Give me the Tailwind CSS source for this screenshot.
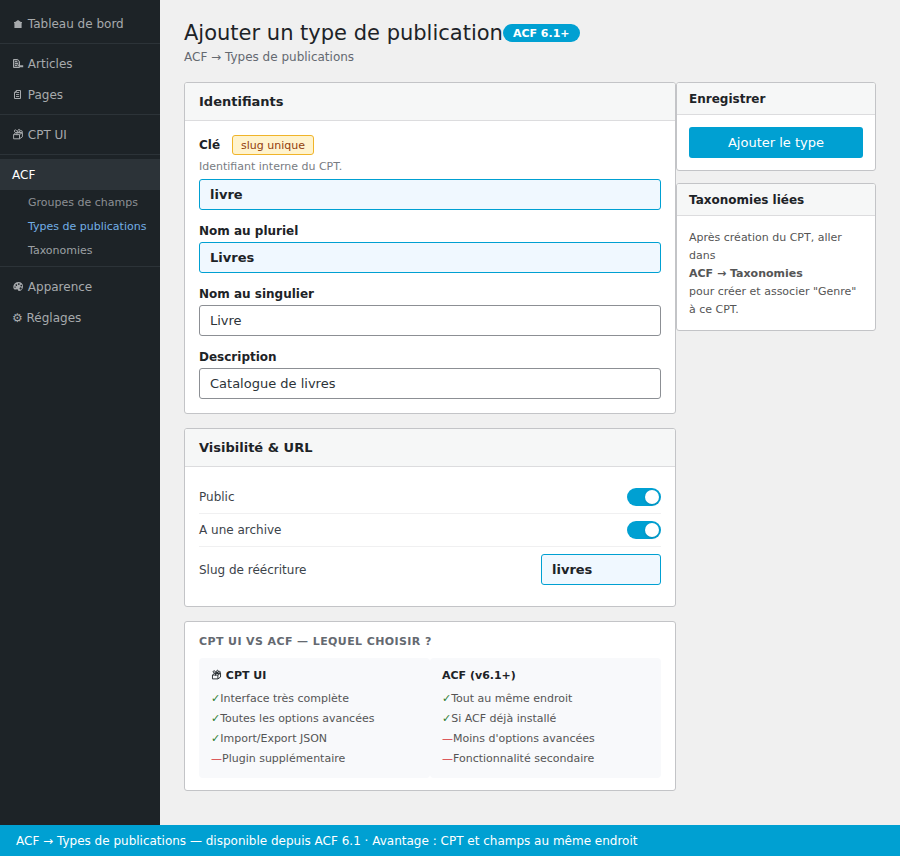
<!DOCTYPE html>
<html lang="fr">
<head>
  <meta charset="UTF-8" />
  <meta name="viewport" content="width=device-width, initial-scale=1" />
  <title>Ajouter un type de publication - ACF</title>
  <script src="https://cdn.jsdelivr.net/npm/@tailwindcss/browser@4"></script>
  <style>
    body { font-family: 'DejaVu Sans', sans-serif; }
  </style>
</head>
<body class="bg-[#f0f0f0] text-[#1d2327] min-h-screen flex flex-col">
  <!-- Icônes -->
  <svg class="hidden" aria-hidden="true">
    <symbol id="i-home" viewBox="0 0 12 12">
      <path d="M6 3 9.6 5.4V11H2.4V5.4Z" fill="currentColor" />
      <path d="M2 5.6h8" stroke="currentColor" />
      <path d="M4.7 7v2.6M7.3 7v2.6" stroke="currentColor" stroke-opacity=".6" />
    </symbol>
    <symbol id="i-articles" viewBox="0 0 12 12">
      <path d="M1.5 2.5h4.2L7.5 4.3v6.2h-6z" fill="currentColor" fill-opacity=".35" stroke="currentColor" />
      <path d="M3 4.5h2M3 6.5h3M3 8.5h2" stroke="currentColor" />
      <path d="M5.2 7.2 8 8.3h3.2v2H7.4Z" fill="currentColor" />
    </symbol>
    <symbol id="i-pages" viewBox="0 0 12 12">
      <path d="M4.3 2.5h4.2v8h-6V4.3Z" fill="none" stroke="currentColor" />
      <path d="M4.4 2.5v2H2.5M4.8 4.5h2.4M4 6.5h3.2M4 8.5h3.2" fill="none" stroke="currentColor" stroke-width=".9" />
    </symbol>
    <symbol id="i-box" viewBox="0 0 12 12">
      <path d="M1.6 6.6h5.9v4.2H1.6zM7.5 6.6l2.9-2v4.2l-2.9 2M1.6 6.6l2.3-2h6.5" fill="none" stroke="currentColor" stroke-linejoin="round" />
      <path d="M5.2 4.8C3 4.8 1.6 3.2 2.6 2.2s2.6.6 3.2 2.4C5.4 2.6 6.2 1 7.4 1.4s.4 2.2-1.2 3.2C7.6 2.8 9.6 2 10.2 3S8.600 5 6.400 4.900M5 5v2.200" fill="none" stroke="currentColor" />
    </symbol>
    <symbol id="i-palette" viewBox="0 0 12 12">
      <path fill-rule="evenodd" d="M6.400 2C9.200 2 11 3.800 11 6.400S9.200 11 7 11C5.800 11 6.300 9.600 5.400 9.200S3.400 10.200 2.200 9.300C.4 8 1.200 2 6.400 2ZM4.300 4.200a.8.8 0 1 0 .1 0ZM6.800 3.300a.8.8 0 1 0 .1 0ZM9.200 4.700a.8.8 0 1 0 .1 0ZM8.600 7.300a1.100 1.100 0 1 0 .1 0ZM3 6.400a.7.7 0 1 0 .1 0Z" fill="currentColor" />
    </symbol>
  </svg>

  <div class="flex flex-grow">
    <!-- Sidebar -->
    <nav class="w-40 shrink-0 bg-[#1d2327] text-[#a7aaad] text-[12px] leading-4 py-2">
      <a href="#" class="block px-3 pt-2 pb-[7px]"><svg class="inline size-3 align-[-1px]"><use href="#i-home" /></svg> Tableau de bord</a>
      <hr class="my-1 border-[#2c3338]" />
      <a href="#" class="block px-3 pt-2 pb-[7px]"><svg class="inline size-3 align-[-1px]"><use href="#i-articles" /></svg> Articles</a>
      <a href="#" class="block px-3 pt-2 pb-[7px]"><svg class="inline size-3 align-[-1px]"><use href="#i-pages" /></svg> Pages</a>
      <hr class="my-1 border-[#2c3338]" />
      <a href="#" class="block px-3 pt-2 pb-[7px]"><svg class="inline size-3 align-[-1px]"><use href="#i-box" /></svg> CPT UI</a>
      <hr class="my-1 border-[#2c3338]" />
      <a href="#" class="block px-3 pt-2 pb-[7px] bg-[#2c3338] text-white">ACF</a>
      <div class="text-[11px] leading-4 whitespace-nowrap">
        <a href="#" class="block pl-7 pt-[5px] pb-[3px] text-[#8c8f94]">Groupes de champs</a>
        <a href="#" class="block pl-7 pt-[5px] pb-[3px] text-[#72aee6]">Types de publications</a>
        <a href="#" class="block pl-7 pt-[5px] pb-[3px] text-[#9ca0a4]">Taxonomies</a>
      </div>
      <hr class="my-1 border-[#2c3338]" />
      <a href="#" class="block px-3 pt-2 pb-[7px]"><svg class="inline size-3 align-[-1px]"><use href="#i-palette" /></svg> Apparence</a>
      <a href="#" class="block px-3 pt-2 pb-[7px]">⚙ Réglages</a>
    </nav>

    <main class="flex-grow min-w-0 px-6 py-5">
      <header class="mb-[18px]">
        <div class="flex items-center">
          <h1 class="text-[21px] leading-[26px]">Ajouter un type de publication</h1>
          <span class="bg-[#00a0d2] text-white text-[11px] leading-[14px] font-bold rounded-full px-[10px] pt-[3px] pb-[1px]">ACF 6.1+</span>
        </div>
        <p class="text-[12px] leading-[14px] text-[#646970] mt-1">ACF → Types de publications</p>
      </header>

      <div class="flex items-start">
        <div class="flex-grow min-w-0 space-y-[14px]">
          <!-- Identifiants -->
          <section class="bg-white border border-[#c3c4c7] rounded-[3px]">
            <h2 class="bg-[#f6f7f7] border-b border-[#dcdcde] rounded-t-[2px] px-[14px] py-[11px] text-[13px] leading-[15px] font-bold">Identifiants</h2>
            <div class="p-[14px] space-y-[14px] text-[12px] leading-[14px]">
              <div>
                <div class="flex items-center gap-3">
                  <label for="cle" class="font-bold">Clé</label>
                  <span class="bg-[#fff3cd] border border-[#f0b429] text-[#92400e] text-[11px] leading-[14px] rounded-[3px] px-2 pt-[3px] pb-[1px]">slug unique</span>
                </div>
                <p id="cleHelp" class="text-[11px] leading-[14px] text-[#787c82] mt-[5px] mb-[5px]">Identifiant interne du CPT.</p>
                <input id="cle" type="text" value="livre" aria-describedby="cleHelp" class="block w-full border border-[#00a0d2] bg-[#f0f8ff] rounded-[3px] px-[10px] py-[7px] text-[13px] leading-[15px] font-bold" />
              </div>
              <div>
                <label for="pluriel" class="block font-bold mb-1">Nom au pluriel</label>
                <input id="pluriel" type="text" value="Livres" class="block w-full border border-[#00a0d2] bg-[#f0f8ff] rounded-[3px] px-[10px] py-[7px] text-[13px] leading-[15px] font-bold" />
              </div>
              <div>
                <label for="singulier" class="block font-bold mb-1">Nom au singulier</label>
                <input id="singulier" type="text" value="Livre" class="block w-full border border-[#8c8f94] bg-white rounded-[3px] px-[10px] py-[7px] text-[13px] leading-[15px] text-[#2c3338]" />
              </div>
              <div>
                <label for="description" class="block font-bold mb-1">Description</label>
                <input id="description" type="text" value="Catalogue de livres" class="block w-full border border-[#8c8f94] bg-white rounded-[3px] px-[10px] py-[7px] text-[13px] leading-[15px] text-[#2c3338]" />
              </div>
            </div>
          </section>

          <!-- Visibilité & URL -->
          <section class="bg-white border border-[#c3c4c7] rounded-[3px]">
            <h2 class="bg-[#f6f7f7] border-b border-[#dcdcde] rounded-t-[2px] px-[14px] py-[11px] text-[13px] leading-[15px] font-bold">Visibilité &amp; URL</h2>
            <div class="p-[14px] text-[12px] leading-4 text-[#3c434a]">
              <div class="flex items-center justify-between py-[7px] border-b border-[#f0f0f1]">
                <label for="public">Public</label>
                <input id="public" type="checkbox" role="switch" checked class="appearance-none w-[34px] h-[18px] rounded-full bg-[#8c8f94] checked:bg-[#00a0d2] p-[2px] before:block before:size-[14px] before:rounded-full before:bg-white before:shadow-sm checked:before:ml-auto" />
              </div>
              <div class="flex items-center justify-between py-[7px] border-b border-[#f0f0f1]">
                <label for="archive">A une archive</label>
                <input id="archive" type="checkbox" role="switch" checked class="appearance-none w-[34px] h-[18px] rounded-full bg-[#8c8f94] checked:bg-[#00a0d2] p-[2px] before:block before:size-[14px] before:rounded-full before:bg-white before:shadow-sm checked:before:ml-auto" />
              </div>
              <div class="flex items-center justify-between py-[7px]">
                <label for="slug">Slug de réécriture</label>
                <input id="slug" type="text" value="livres" class="block w-[120px] border border-[#00a0d2] bg-[#f0f8ff] rounded-[3px] px-[10px] py-[7px] text-[13px] leading-[15px] font-bold text-[#1d2327]" />
              </div>
            </div>
          </section>

          <!-- Comparatif -->
          <section class="bg-white border border-[#c3c4c7] rounded-[3px] px-[14px] pt-[13px] pb-3 text-[11px] leading-[14px]">
            <h2 class="font-bold uppercase tracking-[0.4px] text-[#646970] mb-[9px]">CPT UI vs ACF — lequel choisir ?</h2>
            <div class="grid grid-cols-2">
              <div class="bg-[#f8f9fb] rounded-[4px] px-3 pt-[11px] pb-[9px]">
                <h3 class="font-bold mb-[6px]"><svg class="inline size-[11px] align-[-1px]"><use href="#i-box" /></svg> CPT UI</h3>
                <ul class="leading-5 text-[#555]">
                  <li><span class="text-[#2e7d32]">✓</span>Interface très complète</li>
                  <li><span class="text-[#2e7d32]">✓</span>Toutes les options avancées</li>
                  <li><span class="text-[#2e7d32]">✓</span>Import/Export JSON</li>
                  <li><span class="text-[#d63638]">—</span>Plugin supplémentaire</li>
                </ul>
              </div>
              <div class="bg-[#f8f9fb] rounded-[4px] px-3 pt-[11px] pb-[9px]">
                <h3 class="font-bold mb-[6px]">ACF (v6.1+)</h3>
                <ul class="leading-5 text-[#555]">
                  <li><span class="text-[#2e7d32]">✓</span>Tout au même endroit</li>
                  <li><span class="text-[#2e7d32]">✓</span>Si ACF déjà installé</li>
                  <li><span class="text-[#d63638]">—</span>Moins d'options avancées</li>
                  <li><span class="text-[#d63638]">—</span>Fonctionnalité secondaire</li>
                </ul>
              </div>
            </div>
          </section>
        </div>

        <!-- Colonne latérale -->
        <aside class="w-[200px] shrink-0 space-y-3">
          <section class="bg-white border border-[#c3c4c7] rounded-[3px]">
            <h2 class="bg-[#f6f7f7] border-b border-[#dcdcde] rounded-t-[2px] px-3 pt-2 pb-[7px] text-[12px] leading-4 font-bold">Enregistrer</h2>
            <div class="p-3">
              <button type="button" class="block w-full bg-[#00a0d2] text-white text-[13px] leading-[15px] rounded-[3px] py-2">Ajouter le type</button>
            </div>
          </section>
          <section class="bg-white border border-[#c3c4c7] rounded-[3px]">
            <h2 class="bg-[#f6f7f7] border-b border-[#dcdcde] rounded-t-[2px] px-3 pt-2 pb-[7px] text-[12px] leading-4 font-bold">Taxonomies liées</h2>
            <p class="px-3 pt-[13px] pb-[11px] text-[11px] leading-[18px] text-[#555]">
              Après création du CPT, aller dans<br />
              <strong>ACF → Taxonomies</strong><br />
              pour créer et associer "Genre" à ce CPT.
            </p>
          </section>
        </aside>
      </div>
    </main>
  </div>

  <footer class="bg-[#00a0d2] text-white text-[12px] leading-4 px-4 pt-2 pb-[7px]">
    ACF → Types de publications — disponible depuis ACF 6.1 · Avantage : CPT et champs au même endroit
  </footer>
</body>
</html>
